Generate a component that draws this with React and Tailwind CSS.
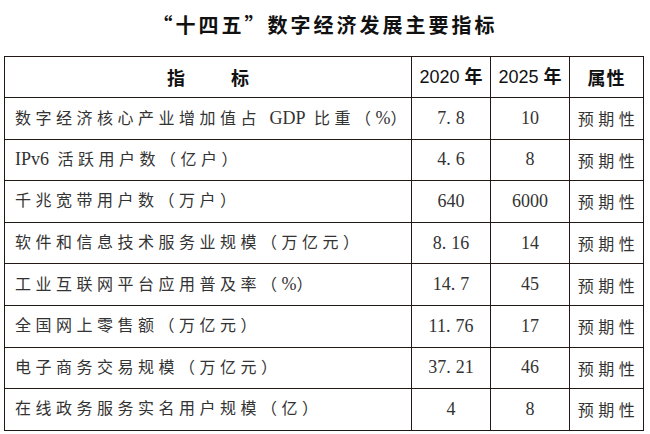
// App.jsx — “十四五” digital economy indicators table

import React from 'react';

const rows = [
    ['数字经济核心产业增加值占 GDP 比重（%）', '7.8', '10'],
    ['IPv6 活跃用户数（亿户）', '4.6', '8'],
    ['千兆宽带用户数（万户）', '640', '6000'],
    ['软件和信息技术服务业规模（万亿元）', '8.16', '14'],
    ['工业互联网平台应用普及率（%）', '14.7', '45'],
    ['全国网上零售额（万亿元）', '11.76', '17'],
    ['电子商务交易规模（万亿元）', '37.21', '46'],
    ['在线政务服务实名用户规模（亿）', '4', '8'],
];

const Label = ({ text }) => (
    <span className="whitespace-nowrap">
        {text.split(/([A-Za-z0-9%]+)/).map((part, i) =>
            /^[A-Za-z0-9%]+$/.test(part) ? (
                <span key={i} className="text-[18px] tracking-normal">{part}</span>
            ) : (
                <span key={i}>{part}</span>
            )
        )}
    </span>
);

const Num = ({ value }) => {
    const [int, frac] = value.split('.');
    return (
        <span className="text-[18px]">
            {int}
            {frac && (
                <>
                    <span className="mr-[5px]">.</span>
                    {frac}
                </>
            )}
        </span>
    );
};

const App = () => {
    return (
        <div className="w-[650px] h-[434px] bg-white pt-[15px] overflow-hidden">
            <h1 className="h-[20px] text-center text-[20px] leading-[20px] font-bold tracking-[3px] text-[#111] font-['Noto_Sans_CJK_SC',sans-serif]">
                “十四五”数字经济发展主要指标
            </h1>

            <div className="mt-[21px] ml-[4px] w-[640px] grid grid-cols-[407px_79px_79px_74px] border-l border-t border-[#231815]">
                {/* header */}
                <div className="h-[41px] flex items-center justify-center gap-[46px] border-r border-b border-[#231815] text-[18px] font-bold text-[#111] font-['Noto_Sans_CJK_SC',sans-serif]">
                    <span>指</span>
                    <span>标</span>
                </div>
                {['2020', '2025'].map((year) => (
                    <div
                        key={year}
                        className="h-[41px] flex items-center justify-center border-r border-b border-[#231815] text-[18px] text-[#111] font-['Liberation_Sans','Noto_Sans_CJK_SC',sans-serif]"
                    >
                        {year}&nbsp;<span className="font-bold">年</span>
                    </div>
                ))}
                <div className="h-[41px] flex items-center justify-center border-r border-b border-[#231815] text-[18px] font-bold tracking-[1px] text-[#111] font-['Noto_Sans_CJK_SC',sans-serif]">
                    属性
                </div>

                {/* body */}
                {rows.map(([label, a, b]) => (
                    <React.Fragment key={label}>
                        <div className="h-[41.6px] flex items-center pl-[10px] border-r border-b border-[#231815] text-[16px] tracking-[4.5px] text-[#333] font-['Liberation_Serif','Noto_Sans_CJK_SC',serif]">
                            <Label text={label} />
                        </div>
                        <div className="h-[41.6px] flex items-center justify-center border-r border-b border-[#231815] text-[#333] font-['Liberation_Serif',serif]">
                            <Num value={a} />
                        </div>
                        <div className="h-[41.6px] flex items-center justify-center border-r border-b border-[#231815] text-[#333] font-['Liberation_Serif',serif]">
                            <Num value={b} />
                        </div>
                        <div className="h-[41.6px] flex items-center justify-center pl-[4px] border-r border-b border-[#231815] text-[16px] tracking-[4.5px] text-[#333] font-['Noto_Sans_CJK_SC',sans-serif]">
                            预期性
                        </div>
                    </React.Fragment>
                ))}
            </div>
        </div>
    );
};

export default App;
